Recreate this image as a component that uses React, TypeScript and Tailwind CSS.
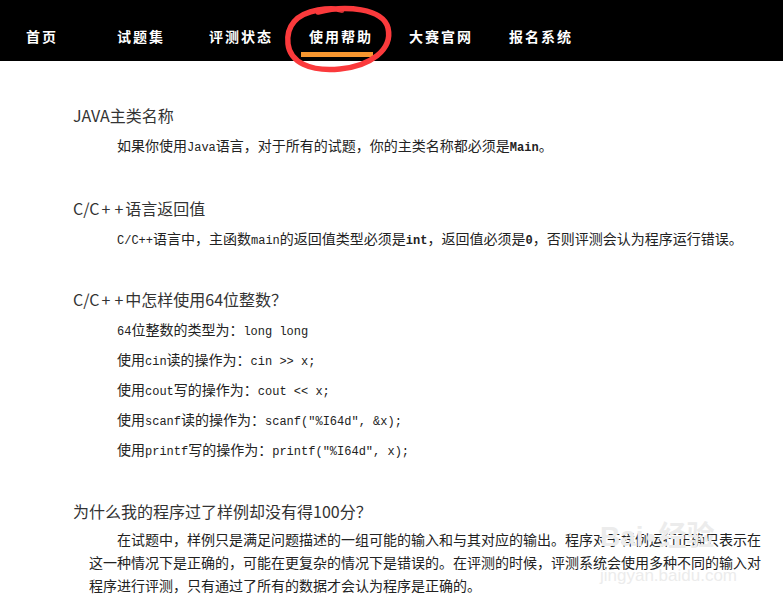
const navItems = [
  { label: "首页", w: "w-[91px]" },
  { label: "试题集", w: "w-[92px]" },
  { label: "评测状态", w: "w-[100px]" },
  { label: "使用帮助", w: "w-[100px]", active: true },
  { label: "大赛官网", w: "w-[100px]" },
  { label: "报名系统", w: "w-[100px]" },
];

function Code({ children, bold }: { children: React.ReactNode; bold?: boolean }) {
  return (
    <span
      className={`text-[12px] leading-none ${bold ? "font-bold" : ""}`}
      style={{ fontFamily: '"Liberation Mono", monospace' }}
    >
      {children}
    </span>
  );
}

function Plus() {
  return <span className="px-[2px]">+</span>;
}

function Heading({ children }: { children: React.ReactNode }) {
  return <h2 className="h-6 text-[16px] leading-6 text-[#333]">{children}</h2>;
}

export default function App() {
  return (
    <div
      className="relative min-h-[605px] overflow-hidden bg-white"
      style={{ fontFamily: '"Noto Sans CJK SC", sans-serif' }}
    >
      <nav className="relative flex h-[61px] bg-black pl-[26px]">
        {navItems.map((item) => (
          <div key={item.label} className={`${item.w} relative shrink-0 pt-[27px]`}>
            <span className="block text-[14px] font-bold leading-[18px] tracking-[2px] text-white">
              {item.label}
            </span>
            {item.active && (
              <div className="absolute left-[-8px] top-[52px] h-[5px] w-[72px] bg-[#f7962f]" />
            )}
          </div>
        ))}
        <svg
          className="absolute left-[280px] top-0 z-10"
          width="120"
          height="75"
          viewBox="280 0 120 75"
          fill="none"
        >
          <path
            d="M318 12 C345 5 383 8 388 28 C393 50 370 66 340 69 C310 72 290 62 288 44 C286 26 296 14 318 10 C330 8 338 9 342 10"
            stroke="#fb3a3c"
            strokeWidth="5.5"
            strokeLinecap="round"
          />
        </svg>
      </nav>

      <main className="pl-[73px] text-[14px] text-[#222]">
        <section className="mt-[42px]">
          <Heading>JAVA主类名称</Heading>
          <p className="mt-[3px] h-[30px] pl-[44px] leading-[30px]">
            如果你使用<Code>Java</Code>语言，对于所有的试题，你的主类名称都必须是<Code bold>Main</Code>。
          </p>
        </section>

        <section className="mt-[36px]">
          <Heading>
            C/C<Plus />
            <Plus />语言返回值
          </Heading>
          <p className="mt-[3px] h-[30px] pl-[44px] leading-[30px]">
            <Code>C/C++</Code>语言中，主函数<Code>main</Code>的返回值类型必须是<Code bold>int</Code>，返回值必须是<Code bold>0</Code>，否则评测会认为程序运行错误。
          </p>
        </section>

        <section className="mt-[34px]">
          <Heading>
            C/C<Plus />
            <Plus />中怎样使用64位整数？
          </Heading>
          <div className="mt-[3px] pl-[44px] leading-[30px]">
            <p className="h-[30px]">
              <Code>64</Code>位整数的类型为：<Code>long long</Code>
            </p>
            <p className="h-[30px]">
              使用<Code>cin</Code>读的操作为：<Code>cin &gt;&gt; x;</Code>
            </p>
            <p className="h-[30px]">
              使用<Code>cout</Code>写的操作为：<Code>cout &lt;&lt; x;</Code>
            </p>
            <p className="h-[30px]">
              使用<Code>scanf</Code>读的操作为：<Code>scanf("%I64d", &amp;x);</Code>
            </p>
            <p className="h-[30px]">
              使用<Code>printf</Code>写的操作为：<Code>printf("%I64d", x);</Code>
            </p>
          </div>
        </section>

        <section className="mt-[35px]">
          <Heading>为什么我的程序过了样例却没有得100分？</Heading>
          <p className="mt-[5px] ml-[16px] w-[675px] indent-[28px] leading-[23px]">
            在试题中，样例只是满足问题描述的一组可能的输入和与其对应的输出。程序对于样例运行正确只表示在这一种情况下是正确的，可能在更复杂的情况下是错误的。在评测的时候，评测系统会使用多种不同的输入对程序进行评测，只有通过了所有的数据才会认为程序是正确的。
          </p>
        </section>
      </main>

      <div className="pointer-events-none absolute left-[600px] top-[520px] flex flex-col items-start text-[#ececec]">
        <div
          className="flex items-center gap-[2px] text-[28px] font-bold leading-[34px]"
          style={{ fontFamily: '"Liberation Sans", "Noto Sans CJK SC", sans-serif' }}
        >
          <span>Bai</span>
          <span className="text-[18px]">●</span>
          <span>经验</span>
        </div>
        <div className="mt-[12px] text-[17px] leading-[20px]" style={{ fontFamily: '"Liberation Sans", sans-serif' }}>
          jingyan.baidu.com
        </div>
      </div>
    </div>
  );
}
